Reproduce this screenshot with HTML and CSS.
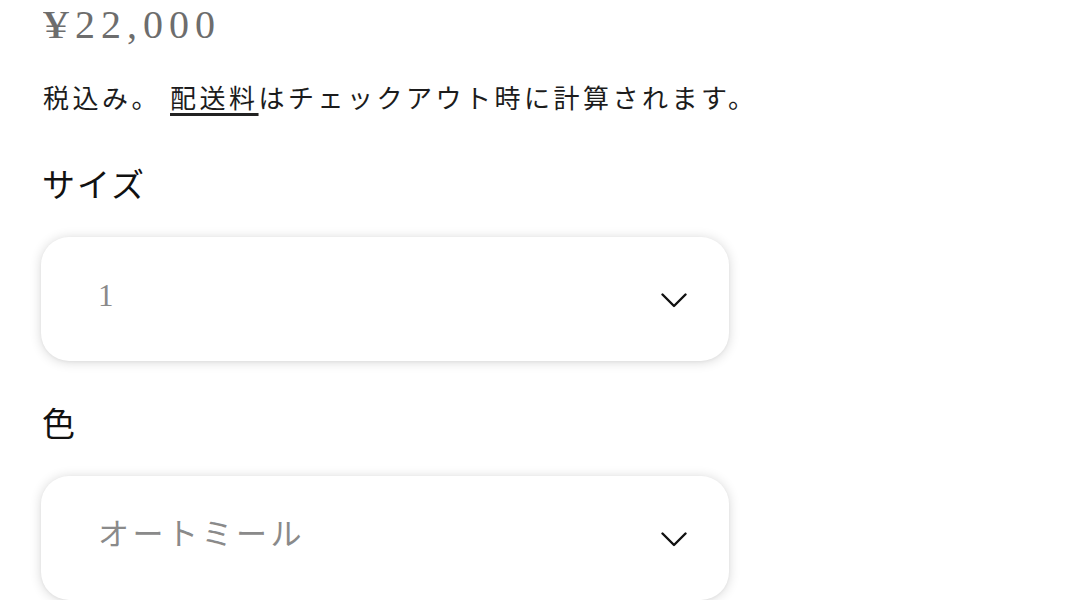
FILE: index.html
```html
<!DOCTYPE html>
<html lang="ja">
<head>
<meta charset="utf-8">
<title>商品</title>
<link rel="stylesheet" href="styles.css">
</head>
<body>
<div class="product-info">
  <div class="price"><span class="currency">¥</span>22,000</div>
  <p class="tax-note">税込み。<a class="shipping-link" href="#">配送料</a>はチェックアウト時に計算されます。</p>

  <div class="option">
    <div class="option-label">サイズ</div>
    <div class="select">
      <span class="select-value">1</span>
      <svg class="chevron" width="26" height="15" viewBox="0 0 26 15" aria-hidden="true">
        <path d="M1.5 1.5 L13 13 L24.5 1.5" fill="none" stroke="#111" stroke-width="2.4" stroke-linecap="round" stroke-linejoin="round"/>
      </svg>
    </div>
  </div>

  <div class="option">
    <div class="option-label">色</div>
    <div class="select">
      <span class="select-value">オートミール</span>
      <svg class="chevron" width="26" height="15" viewBox="0 0 26 15" aria-hidden="true">
        <path d="M1.5 1.5 L13 13 L24.5 1.5" fill="none" stroke="#111" stroke-width="2.4" stroke-linecap="round" stroke-linejoin="round"/>
      </svg>
    </div>
  </div>
</div>
</body>
</html>
```

FILE: styles.css
```css
html, body {
  margin: 0;
  padding: 0;
  background: #ffffff;
}

body {
  font-family: "Liberation Serif", "Noto Sans CJK JP", serif;
  color: #151515;
}

.product-info {
  padding: 1px 0 0 41px;
}

.price {
  font-size: 40px;
  line-height: 48px;
  letter-spacing: 6px;
  color: #6d6d6d;
  padding-left: 2px;
}

.currency {
  display: inline-block;
  transform: scaleX(1.3);
  transform-origin: left center;
  margin-right: 6px;
}

.tax-note {
  margin: 33px 0 0;
  padding-left: 2px;
  font-size: 26px;
  line-height: 36px;
  letter-spacing: 3.5px;
  color: #1c1c1c;
  white-space: nowrap;
}

.shipping-link {
  color: inherit;
  text-decoration: underline;
  text-decoration-color: #222;
  text-decoration-thickness: 2.5px;
  text-underline-offset: 5px;
  margin-left: 9px;
}

.option-label {
  font-size: 33px;
  line-height: 44px;
  letter-spacing: 2px;
  color: #111;
  padding-left: 1px;
  margin: 46px 0 29px;
}

.option + .option .option-label {
  margin-top: 42px;
}

.select {
  width: 688px;
  height: 124px;
  box-sizing: border-box;
  border-radius: 28px;
  background: #fff;
  box-shadow: 0 1px 12px rgba(0, 0, 0, 0.16), 0 1px 3px rgba(0, 0, 0, 0.04);
  display: flex;
  align-items: center;
  justify-content: space-between;
  padding: 0 42px 0 57px;
}

.select-value {
  font-size: 31px;
  line-height: 40px;
  letter-spacing: 3.5px;
  color: #8a8a8a;
  margin-bottom: 6px;
}

.chevron {
  display: block;
  margin-top: 3px;
}
```
